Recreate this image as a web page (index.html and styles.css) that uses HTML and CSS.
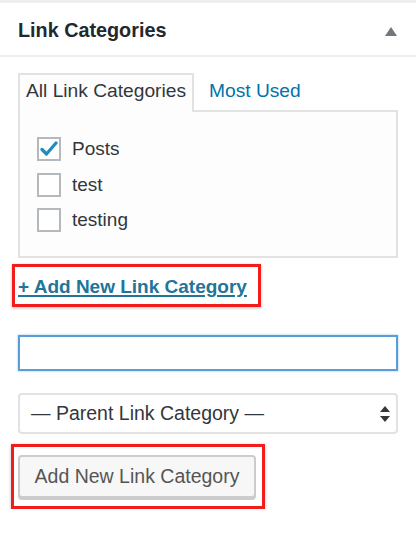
FILE: index.html
```html
<!DOCTYPE html>
<html>
<head>
<meta charset="utf-8">
<link rel="stylesheet" href="styles.css">
</head>
<body>
<div class="widget">
  <div class="header">
    <h2 class="title">Link Categories</h2>
    <svg class="toggle" width="12" height="9" viewBox="0 0 12 9"><polygon points="6,0 12,9 0,9" fill="#72777c"/></svg>
  </div>
  <div class="inside">
    <div class="tabs">
      <span class="tab active">All Link Categories</span>
      <span class="tab">Most Used</span>
    </div>
    <div class="panel">
      <div class="row"><span class="box"><svg width="18" height="16" viewBox="0 0 18 16"><path d="M2 8.5 L6.5 13 L16 2" fill="none" stroke="#1e8cbe" stroke-width="3.2" stroke-linecap="round" stroke-linejoin="round"/></svg></span><span class="label">Posts</span></div>
      <div class="row"><span class="box"></span><span class="label">test</span></div>
      <div class="row"><span class="box"></span><span class="label">testing</span></div>
    </div>
    <div class="hl hl-link"><a class="addlink" href="#">+ Add New Link Category</a></div>
    <div class="field"></div>
    <div class="select"><span>— Parent Link Category —</span>
      <svg class="arrows" width="10" height="16" viewBox="0 0 10 16"><polygon points="5,0 10,6 0,6" fill="#32373c"/><polygon points="0,10 10,10 5,16" fill="#32373c"/></svg>
    </div>
    <div class="hl hl-btn"><span class="button">Add New Link Category</span></div>
  </div>
</div>
</body>
</html>
```
FILE: styles.css
```css
html, body {
  margin: 0;
  padding: 0;
  background: #ffffff;
}
body {
  font-family: "Liberation Sans", Arial, sans-serif;
  color: #32373c;
}
.widget {
  border-top: 3px solid #eeeeee;
  width: 416px;
}
.header {
  height: 52px;
  display: flex;
  align-items: center;
  justify-content: space-between;
  padding: 0 19px 0 18px;
  border-bottom: 2px solid #eeeeee;
}
.title {
  margin: 3px 0 0 0;
  font-size: 19.8px;
  font-weight: bold;
  color: #23282d;
}
.toggle {
  margin-top: 5px;
}
.inside {
  padding: 14px 18px 0 18px;
}
.tabs {
  display: flex;
  align-items: flex-end;
  height: 39px;
}
.tab {
  font-size: 19.2px;
  line-height: 32px;
  padding: 0 14px 3px 15px;
  color: #0073aa;
}
.tab.active {
  color: #32373c;
  background: #fdfdfd;
  border: 2px solid #e2e2e2;
  border-bottom: none;
  padding: 0 6px;
  height: 39px;
  margin-bottom: -2px;
  position: relative;
  box-sizing: border-box;
  line-height: 32px;
}
.panel {
  border: 2px solid #e2e2e2;
  background: #fdfdfd;
  padding: 25px 17px 0 17px;
  box-sizing: border-box;
  height: 148px;
}
.row {
  display: flex;
  align-items: center;
  height: 24px;
  margin-bottom: 11.5px;
}
.box {
  width: 20px;
  height: 20px;
  border: 2px solid #b4b9be;
  background: #ffffff;
  display: flex;
  align-items: center;
  justify-content: center;
  margin-right: 11px;
  flex: none;
}
.label {
  font-size: 19px;
  color: #32373c;
}
.hl {
  display: inline-block;
  border: 3px solid #f21c1c;
  box-shadow: 0 1px 3px rgba(0,0,0,0.25);
}
.hl-link {
  margin: 6px 0 0 -6px;
  padding: 7px 11px 5px 3px;
}
.addlink {
  font-size: 19px;
  font-weight: bold;
  color: #21759b;
  text-decoration: underline;
  text-underline-offset: 2px;
  text-decoration-thickness: 2px;
  line-height: 25px;
}
.field {
  margin-top: 28px;
  height: 36px;
  border: 2px solid #5b9dd9;
  box-sizing: border-box;
  background: #ffffff;
  box-shadow: 0 0 2px rgba(30,140,190,0.5);
}
.select {
  margin-top: 22px;
  height: 41px;
  border: 2px solid #e2e2e2;
  border-radius: 4px;
  box-sizing: border-box;
  display: flex;
  align-items: center;
  justify-content: space-between;
  padding: 0 6px 0 11px;
  font-size: 19.5px;
  color: #32373c;
  background: #ffffff;
}
.hl-btn {
  display: block;
  width: 254px;
  margin: 10px 0 0 -7px;
  padding: 8px 6px 8px 4px;
  box-sizing: border-box;
}
.button {
  display: flex;
  align-items: center;
  justify-content: center;
  height: 43px;
  width: 238px;
  box-sizing: border-box;
  border: 2px solid #cccccc;
  border-radius: 4px;
  background: #f7f7f7;
  box-shadow: 0 2px 0 #cccccc;
  font-size: 19.5px;
  color: #555555;
}
```
